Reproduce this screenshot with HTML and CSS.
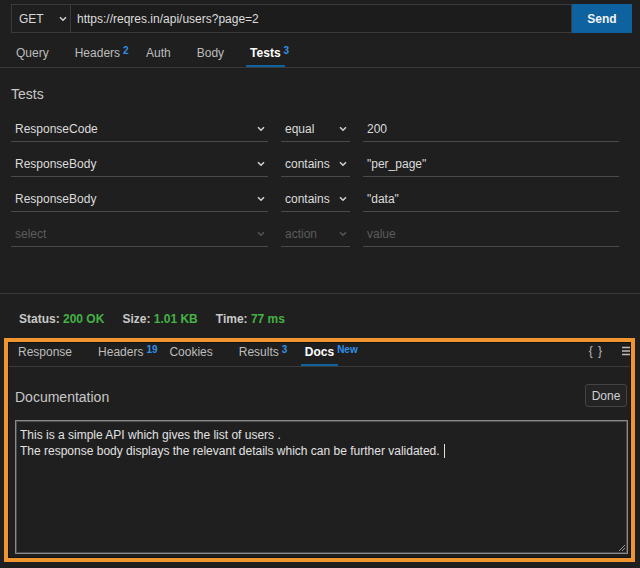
FILE: index.html
```html
<!DOCTYPE html>
<html>
<head>
<meta charset="utf-8">
<link rel="stylesheet" href="styles.css">
</head>
<body>
<div class="urlbar">
  <div class="method"><span>GET</span><svg class="chev" width="8" height="6" viewBox="0 0 8 6"><path d="M1 1.2 L4 4.2 L7 1.2" fill="none" stroke="#cfcfcf" stroke-width="1.6"/></svg></div>
  <div class="url">https://reqres.in/api/users?page=2</div>
  <div class="send">Send</div>
</div>
<div class="tabs reqtabs">
  <div class="tab">Query</div>
  <div class="tab">Headers<sup class="badge">2</sup></div>
  <div class="tab">Auth</div>
  <div class="tab">Body</div>
  <div class="tab active">Tests<sup class="badge">3</sup></div>
</div>
<div class="tests">
  <div class="heading">Tests</div>
  <div class="grid">
    <div class="field sel">ResponseCode<svg class="chev" width="8" height="6" viewBox="0 0 8 6"><path d="M1 1.2 L4 4.2 L7 1.2" fill="none" stroke="#cfcfcf" stroke-width="1.6"/></svg></div>
    <div class="field sel">equal<svg class="chev" width="8" height="6" viewBox="0 0 8 6"><path d="M1 1.2 L4 4.2 L7 1.2" fill="none" stroke="#cfcfcf" stroke-width="1.6"/></svg></div>
    <div class="field">200</div>
    <div class="field sel">ResponseBody<svg class="chev" width="8" height="6" viewBox="0 0 8 6"><path d="M1 1.2 L4 4.2 L7 1.2" fill="none" stroke="#cfcfcf" stroke-width="1.6"/></svg></div>
    <div class="field sel">contains<svg class="chev" width="8" height="6" viewBox="0 0 8 6"><path d="M1 1.2 L4 4.2 L7 1.2" fill="none" stroke="#cfcfcf" stroke-width="1.6"/></svg></div>
    <div class="field">"per_page"</div>
    <div class="field sel">ResponseBody<svg class="chev" width="8" height="6" viewBox="0 0 8 6"><path d="M1 1.2 L4 4.2 L7 1.2" fill="none" stroke="#cfcfcf" stroke-width="1.6"/></svg></div>
    <div class="field sel">contains<svg class="chev" width="8" height="6" viewBox="0 0 8 6"><path d="M1 1.2 L4 4.2 L7 1.2" fill="none" stroke="#cfcfcf" stroke-width="1.6"/></svg></div>
    <div class="field">"data"</div>
    <div class="field sel ph">select<svg class="chev" width="8" height="6" viewBox="0 0 8 6"><path d="M1 1.2 L4 4.2 L7 1.2" fill="none" stroke="#555" stroke-width="1.6"/></svg></div>
    <div class="field sel ph">action<svg class="chev" width="8" height="6" viewBox="0 0 8 6"><path d="M1 1.2 L4 4.2 L7 1.2" fill="none" stroke="#555" stroke-width="1.6"/></svg></div>
    <div class="field ph">value</div>
  </div>
</div>
<div class="status">
  <span class="stat"><b>Status:</b> <span class="ok">200 OK</span></span>
  <span class="stat"><b>Size:</b> <span class="ok">1.01 KB</span></span>
  <span class="stat"><b>Time:</b> <span class="ok">77 ms</span></span>
</div>
<div class="highlight">
  <div class="panel">
    <div class="tabs restabs">
      <div class="tab">Response</div>
      <div class="tab">Headers<sup class="badge">19</sup></div>
      <div class="tab">Cookies</div>
      <div class="tab">Results<sup class="badge">3</sup></div>
      <div class="tab active">Docs<sup class="badge">New</sup></div>
      <div class="tools">
        <span class="braces">{ }</span>
        <svg class="menu" width="12" height="10" viewBox="0 0 12 10"><path d="M0 1.5 H12 M0 5 H12 M0 8.5 H12" stroke="#bbb" stroke-width="1.3"/></svg>
      </div>
    </div>
    <div class="docshead">
      <div class="heading">Documentation</div>
      <div class="done">Done</div>
    </div>
    <div class="doctext">
      <div>This is a simple API which gives the list of users .</div>
      <div>The response body displays the relevant details which can be further validated.<span class="caret"></span></div>
      <svg class="grip" width="7" height="7" viewBox="0 0 7 7"><path d="M7 1 L1 7 M7 4 L4 7" stroke="#9a9a9a" stroke-width="1"/></svg>
    </div>
  </div>
</div>
</body>
</html>
```
FILE: styles.css
```css
html, body {
  margin: 0;
  padding: 0;
  background: #1f1f1f;
  height: 568px;
  overflow: hidden;
}
body {
  font-family: "Liberation Sans", Arial, sans-serif;
  font-size: 12px;
  color: #cccccc;
}
.urlbar {
  display: flex;
  height: 29px;
  margin: 4px 8px 0 11px;
}
.method {
  width: 60px;
  box-sizing: border-box;
  border: 1px solid #3a3a3a;
  display: flex;
  align-items: center;
  justify-content: space-between;
  padding: 0 3px 0 7px;
  color: #d8d8d8;
}
.url {
  flex: 1;
  border: 1px solid #3a3a3a;
  border-left: none;
  background: #1c1c1c;
  display: flex;
  align-items: center;
  padding-left: 6px;
  color: #dddddd;
}
.send {
  width: 60px;
  background: #0e62a0;
  color: #f2f2f2;
  font-weight: bold;
  display: flex;
  align-items: center;
  justify-content: center;
}
.tabs {
  display: flex;
  align-items: flex-end;
  gap: 18px;
  border-bottom: 1px solid #3a3a3a;
}
.reqtabs {
  height: 34px;
  padding-left: 12px;
}
.tab {
  position: relative;
  padding: 0 4px 6px;
  line-height: 16px;
  color: #bdbdbd;
}
.tab.active {
  color: #ffffff;
  font-weight: bold;
}
.tab.active::after {
  content: "";
  position: absolute;
  left: 0;
  right: 0;
  bottom: 0;
  height: 2px;
  background: #0e62a0;
}
.badge {
  position: absolute;
  left: calc(100% - 1px);
  top: 0;
  font-size: 10px;
  font-weight: bold;
  color: #2f8fe8;
  line-height: 12px;
}
.tests {
  height: 226px;
  box-sizing: border-box;
  padding: 16px 21px 0 11px;
  border-bottom: 1px solid #3a3a3a;
}
.heading {
  font-size: 14px;
  line-height: 20px;
  color: #c8c8c8;
  margin-bottom: 12px;
}
.grid {
  display: grid;
  grid-template-columns: 257px 69px 256px;
  column-gap: 13px;
  row-gap: 9px;
}
.field {
  height: 26px;
  box-sizing: border-box;
  border-bottom: 1px solid #4a4a4a;
  display: flex;
  align-items: center;
  justify-content: space-between;
  padding: 0 3px 0 4px;
  color: #dcdcdc;
}
.field.ph {
  color: #5c5c5c;
}
.status {
  padding: 17px 0 0 19px;
  line-height: 16px;
  display: flex;
  gap: 18px;
}
.status b {
  color: #c8c8c8;
}
.ok {
  color: #44b244;
  font-weight: bold;
}
.highlight {
  margin: 11px 5px 0 4px;
  border: 4px solid #f0952f;
}
.panel {
  height: 216px;
  box-sizing: border-box;
  border: 1px solid #121212;
  overflow: hidden;
}
.restabs {
  height: 24px;
  box-sizing: border-box;
  padding-left: 5px;
}
.tools {
  margin-left: auto;
  display: flex;
  align-items: center;
  gap: 19px;
  padding-bottom: 8px;
  margin-right: -4px;
}
.braces {
  color: #bbbbbb;
  font-size: 12px;
  line-height: 14px;
  letter-spacing: 1px;
}
.docshead {
  display: flex;
  align-items: center;
  justify-content: space-between;
  padding: 17px 3px 0 6px;
  height: 23px;
  margin-bottom: 13px;
}
.docshead .heading {
  margin: 3px 0 0;
}
.done {
  width: 42px;
  height: 23px;
  box-sizing: border-box;
  border: 1px solid #444444;
  border-radius: 3px;
  background: #242424;
  display: flex;
  align-items: center;
  justify-content: center;
  color: #d0d0d0;
}
.doctext {
  position: relative;
  height: 134px;
  box-sizing: border-box;
  margin: 0 2px 0 6px;
  border: 1px solid #8a8a8a;
  box-shadow: inset 0 0 0 1px #4a4a4a;
  padding: 6px 4px;
  line-height: 16px;
  color: #e2e2e2;
}
.caret {
  display: inline-block;
  width: 1px;
  height: 14px;
  background: #dddddd;
  margin-left: 4px;
  vertical-align: -3px;
}
.grip {
  position: absolute;
  right: 2px;
  bottom: 2px;
}
```
